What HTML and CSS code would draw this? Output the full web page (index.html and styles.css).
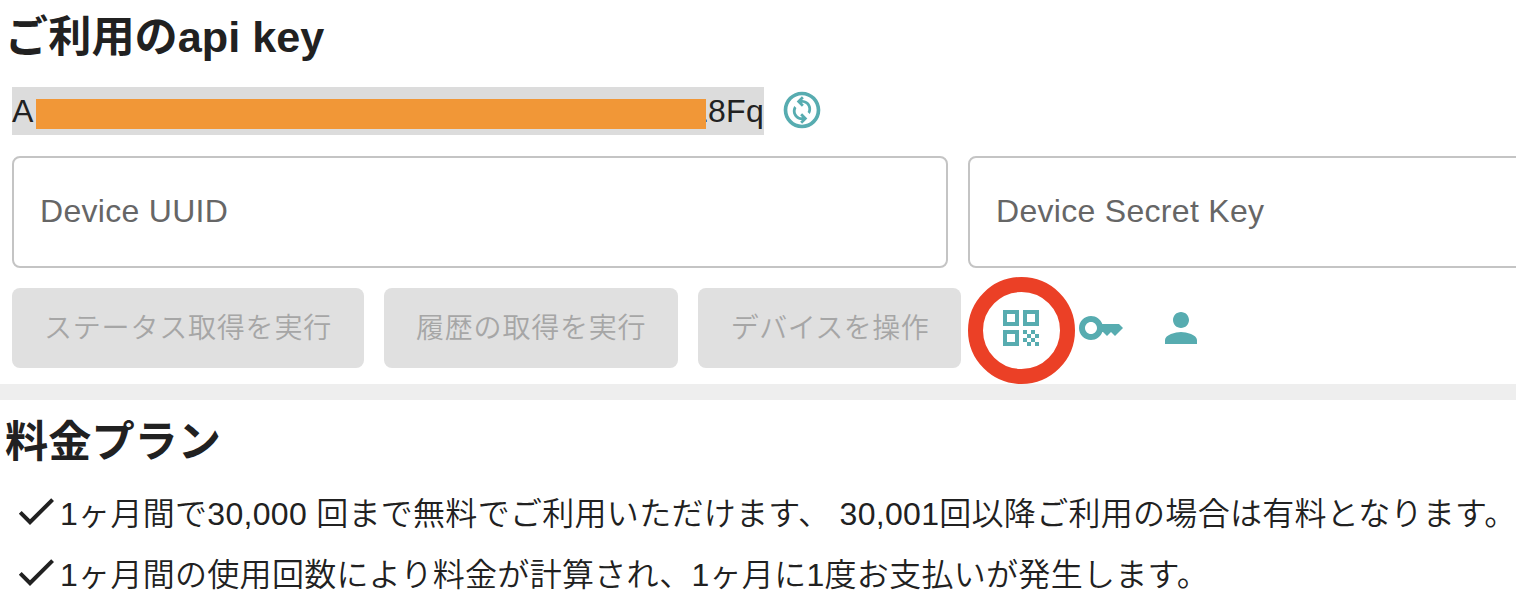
FILE: index.html
```html
<!DOCTYPE html>
<html lang="ja">
<head>
<meta charset="utf-8"/>
<meta content="width=device-width, initial-scale=1.0" name="viewport"/>
<title>api key</title>
<link rel="stylesheet" href="styles.css">
</head>
<body>
<section class="api">
  <h2 class="title">ご利用のapi key</h2>
  <div class="key-row">
    <div class="api-key"><span>A</span><span>L8Fq</span><div class="mask"></div></div>
    <svg class="icon refresh" viewBox="0 0 24 24"><path d="M12 2C6.48 2 2 6.48 2 12s4.48 10 10 10 10-4.48 10-10S17.52 2 12 2zm0 18c-4.41 0-8-3.59-8-8s3.59-8 8-8 8 3.59 8 8-3.59 8-8 8z"/><path d="M16.17 14.24l-1.1-1.1c.71-1.33.53-3.01-.59-4.13C13.79 8.32 12.9 8 12 8c-.03 0-.06.01-.09.01L13 9.1l-1.06 1.06-2.83-2.83L11.94 4.5 13 5.56l-.96.96c1.27.01 2.53.48 3.5 1.44 1.7 1.71 1.91 4.36.63 6.28z"/><path d="M14.89 16.67L12.06 19.5 11 18.44l.95-.95c-1.26-.01-2.52-.5-3.48-1.46-1.71-1.71-1.92-4.35-.64-6.27l1.1 1.1c-.71 1.33-.53 3.01.59 4.13.7.7 1.63 1.04 2.56 1.01L11 14.9l1.06-1.06z"/></svg>
  </div>
  <div class="fields">
    <div class="field">Device UUID</div>
    <div class="field">Device Secret Key</div>
  </div>
  <div class="actions">
    <button class="btn" disabled>ステータス取得を実行</button>
    <button class="btn" disabled>履歴の取得を実行</button>
    <button class="btn tight" disabled>デバイスを操作</button>
    <div class="icons">
      <div class="qr">
        <svg class="icon" viewBox="0 0 24 24"><path fill-rule="evenodd" d="M3 11h8V3H3v8zm2-6h4v4H5V5zM3 21h8v-8H3v8zm2-6h4v4H5v-4zM13 3v8h8V3h-8zm6 6h-4V5h4v4z"/><path d="M19 19h2v2h-2zM13 13h2v2h-2zM15 15h2v2h-2zM13 17h2v2h-2zM15 19h2v2h-2zM17 17h2v2h-2zM17 13h2v2h-2zM19 15h2v2h-2z"/></svg>
        <div class="ring"></div>
      </div>
      <svg class="icon" viewBox="0 0 24 24"><path d="M21 10h-8.35C11.83 7.67 9.61 6 7 6c-3.31 0-6 2.69-6 6s2.69 6 6 6c2.61 0 4.83-1.67 5.65-4H13l2 2 2-2 2 2 4-4.04L21 10zM7 15c-1.65 0-3-1.35-3-3s1.35-3 3-3 3 1.35 3 3-1.35 3-3 3z"/></svg>
      <svg class="icon" viewBox="0 0 24 24"><path d="M12 12c2.21 0 4-1.79 4-4s-1.79-4-4-4-4 1.79-4 4 1.79 4 4 4zm0 2c-2.67 0-8 1.34-8 4v2h16v-2c0-2.66-5.33-4-8-4z"/></svg>
    </div>
  </div>
</section>
<section class="plan">
  <h2 class="title">料金プラン</h2>
  <ul class="list">
    <li><svg class="check" viewBox="0 0 24 24"><path d="M9 16.17L4.83 12l-1.42 1.41L9 19 21 7l-1.41-1.41z"/></svg><span class="text">1ヶ月間で30,000 回まで無料でご利用いただけます、 30,001回以降ご利用の場合は有料となります。</span></li>
    <li><svg class="check" viewBox="0 0 24 24"><path d="M9 16.17L4.83 12l-1.42 1.41L9 19 21 7l-1.41-1.41z"/></svg><span class="text">1ヶ月間の使用回数により料金が計算され、1ヶ月に1度お支払いが発生します。</span></li>
  </ul>
</section>
</body>
</html>
```
FILE: styles.css
```css
* {
  box-sizing: border-box;
}
body {
  margin: 0;
  background: #fff;
  color: #212121;
  font-family: "Liberation Sans", "Noto Sans CJK JP", sans-serif;
  font-size: 32px;
  line-height: 48px;
  letter-spacing: 0.3px;
  overflow: hidden;
}
.api {
  height: 400px;
  border-bottom: 16px solid #eee;
}
.title {
  margin: 0;
  padding: 11px 0 0 5px;
  font-size: 43.2px;
  line-height: 52px;
  letter-spacing: 0;
}
.key-row {
  display: flex;
  align-items: flex-start;
  gap: 16px;
  margin: 24px 0 0 12px;
}
.api-key {
  position: relative;
  display: flex;
  justify-content: space-between;
  width: 752px;
  height: 48px;
  background: #dcdcdc;
}
.mask {
  position: absolute;
  left: 24px;
  top: 12px;
  width: 670px;
  height: 30px;
  background: #f19737;
}
.icon {
  display: block;
  width: 48px;
  height: 48px;
  fill: #57acb0;
}
.refresh {
  width: 44px;
  height: 44px;
  margin-top: 1px;
}
.fields {
  display: flex;
  gap: 20px;
  margin: 21px 0 0 12px;
  overflow: hidden;
}
.field {
  flex: none;
  width: 936px;
  height: 112px;
  padding: 29px 26px;
  border: 2px solid #c4c4c4;
  border-radius: 8px;
  color: #666;
}
.actions {
  display: flex;
  gap: 20px;
  margin: 20px 0 0 12px;
}
.btn {
  height: 80px;
  padding: 0 32px 5px;
  border: 0;
  border-radius: 8px;
  background: #e0e0e0;
  color: #a6a6a6;
  font-family: inherit;
  font-size: 28px;
  font-weight: 350;
  letter-spacing: 0.8px;
  white-space: nowrap;
}
.tight {
  width: 263px;
  letter-spacing: 0.45px;
}
.icons {
  display: flex;
  align-items: center;
  gap: 32px;
  margin-left: 16px;
}
.qr {
  position: relative;
}
.ring {
  position: absolute;
  left: -29.5px;
  top: -27px;
  width: 107px;
  height: 107px;
  border: 15px solid #eb4026;
  border-radius: 50%;
}
.plan .title {
  padding-top: 16px;
}
.list {
  margin: 19px 0 0;
  padding: 0 0 0 12px;
  list-style: none;
  font-weight: 350;
}
.list li {
  display: flex;
  height: 61px;
  white-space: nowrap;
}
.check {
  flex: none;
  width: 48px;
  height: 48px;
  fill: #212121;
}
.text {
  padding-top: 3px;
}
```
